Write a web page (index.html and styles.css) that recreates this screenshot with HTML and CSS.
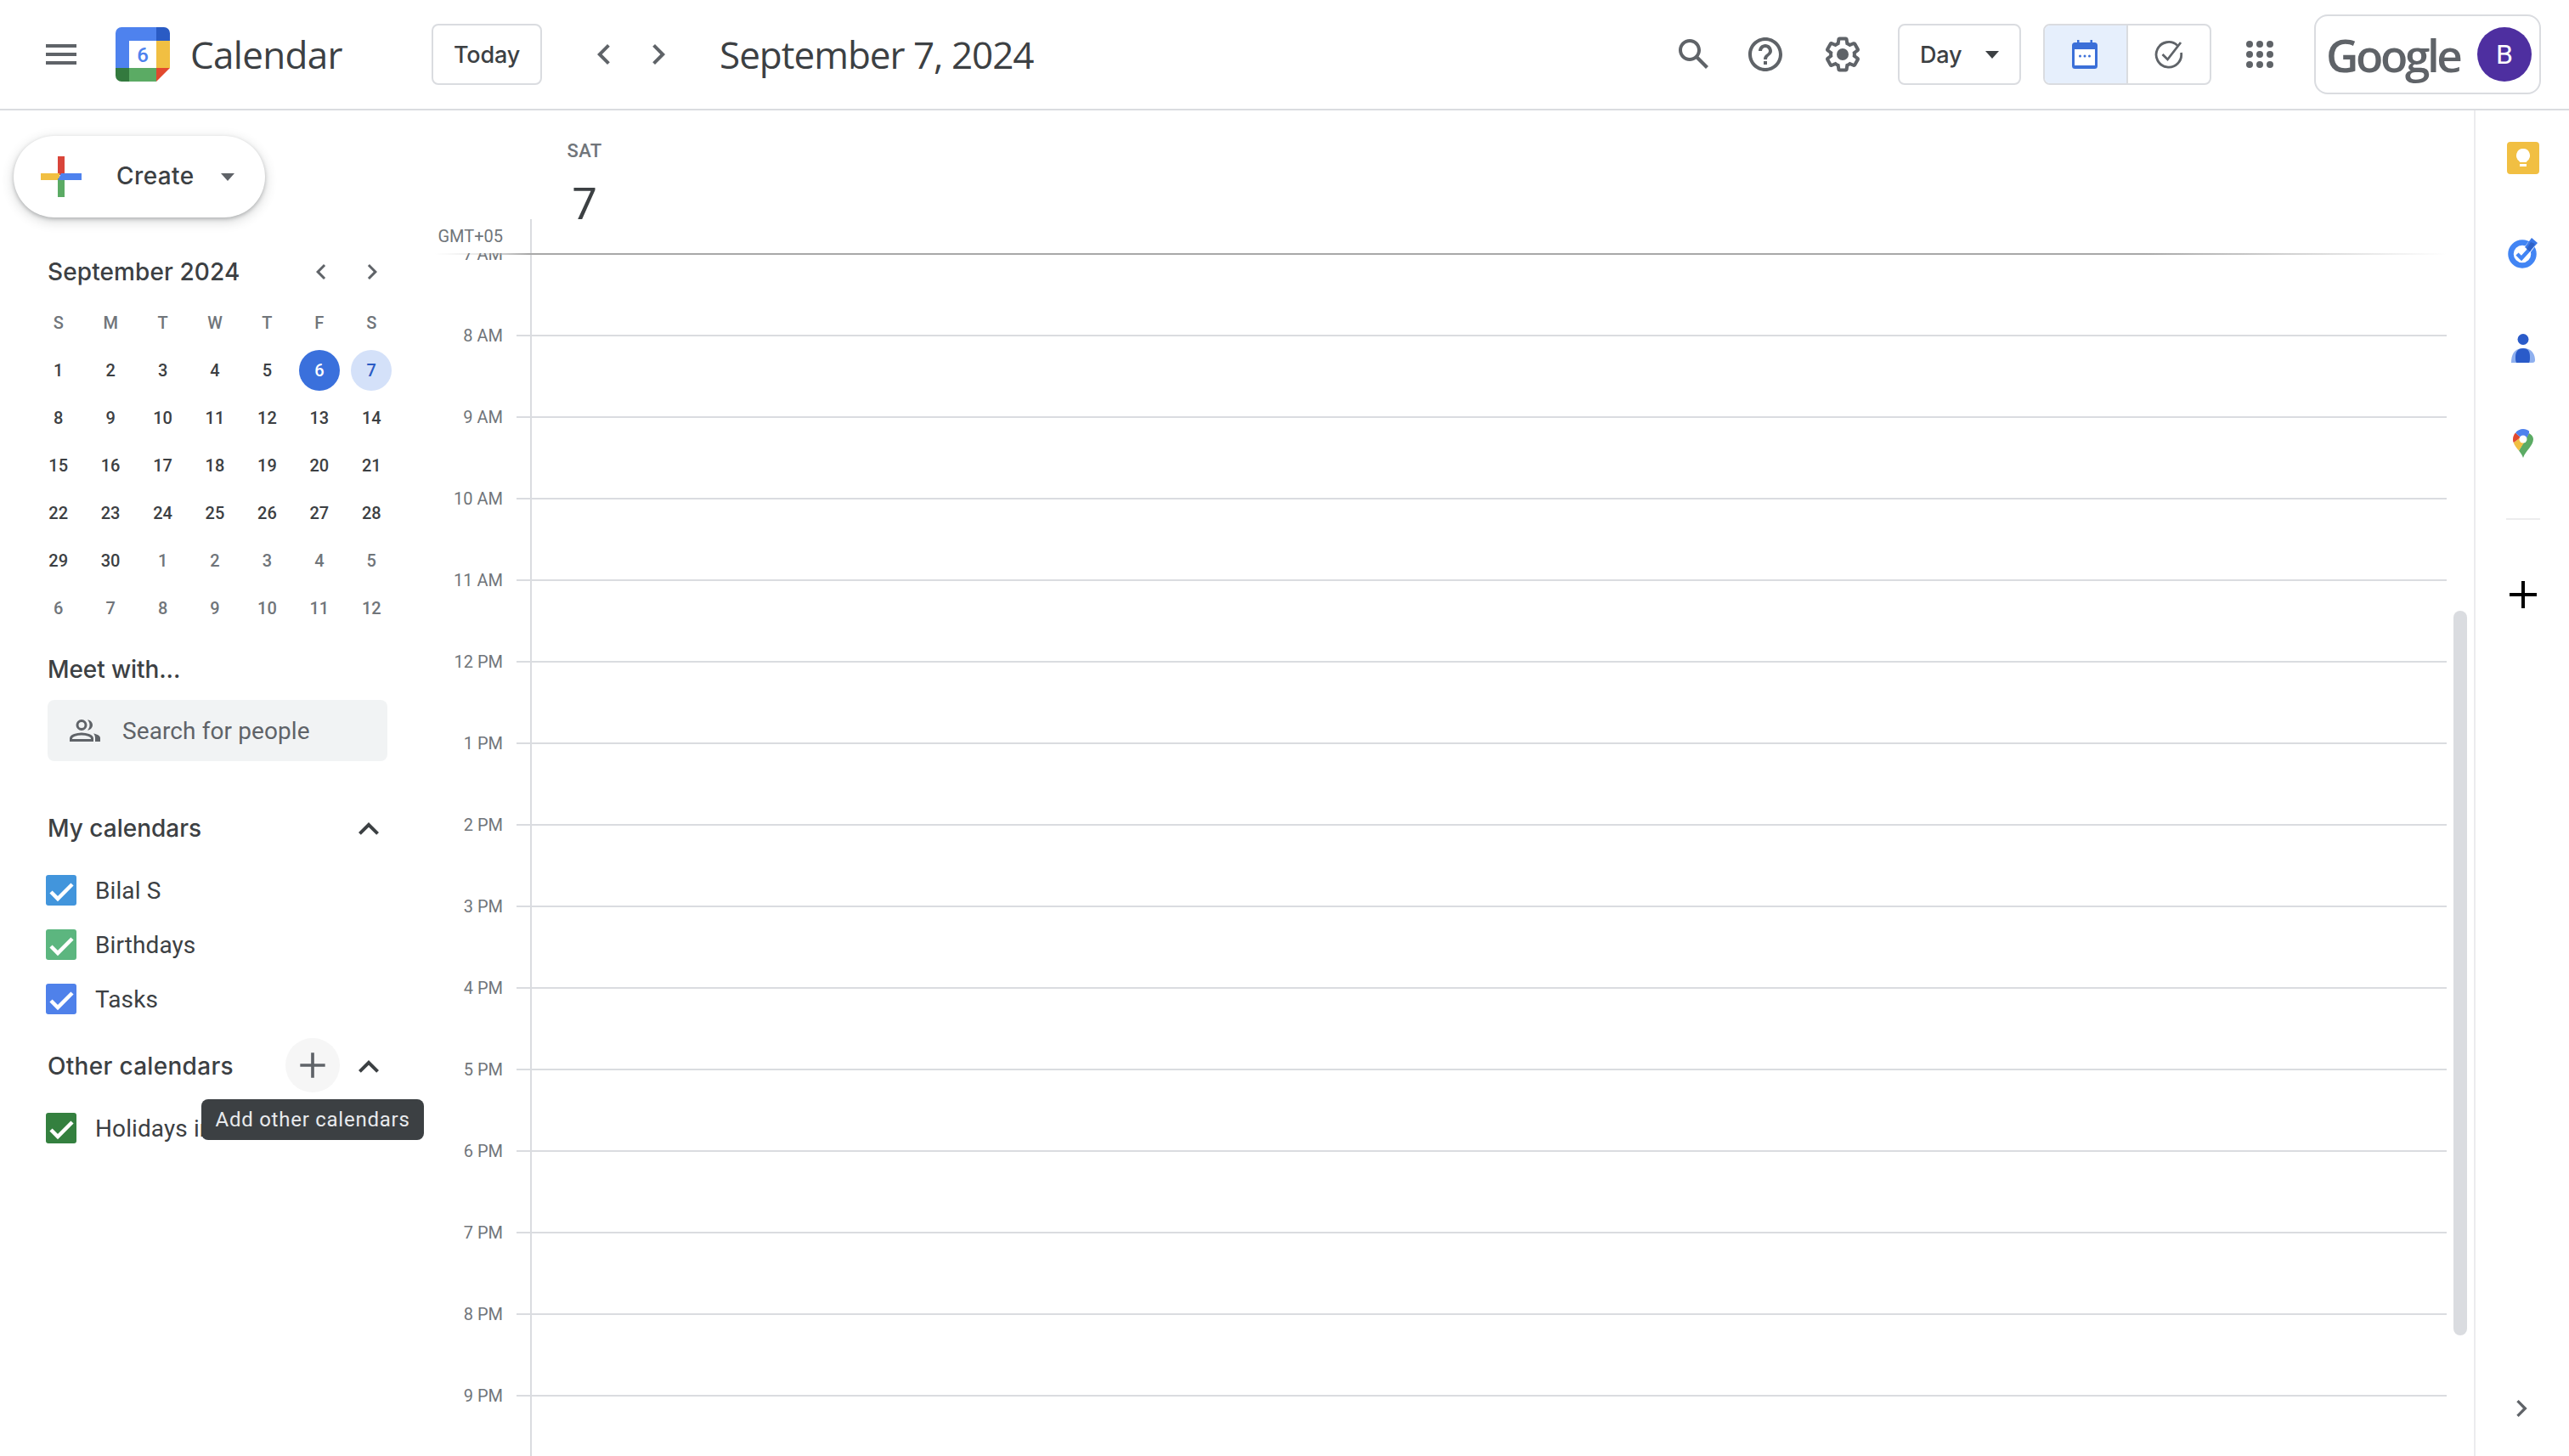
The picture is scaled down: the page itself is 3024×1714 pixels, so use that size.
FILE: index.html
```html
<!DOCTYPE html>
<html lang="en">
<head>
<meta charset="utf-8">
<title>Google Calendar - September 7, 2024</title>
<link rel="stylesheet" href="styles.css">
</head>
<body>
<header class="topbar">
  <div class="brand">
    <svg class="icon48 grey" viewBox="0 0 24 24"><path d="M3 18h18v-2H3v2zm0-5h18v-2H3v2zm0-7v2h18V6H3z"/></svg>
    <svg class="logo" viewBox="0 0 64 64">
      <path fill="#4e82ee" d="M7 0H48V16H16V48H0V7a7 7 0 0 1 7-7z"/>
      <path fill="#2a5bc4" d="M48 0h9a7 7 0 0 1 7 7v9H48z"/>
      <rect fill="#f1bf42" x="48" y="16" width="16" height="32"/>
      <rect fill="#5bab64" x="16" y="48" width="32" height="16"/>
      <path fill="#337a3e" d="M0 48H16V64H7a7 7 0 0 1-7-7z"/>
      <path fill="#e2492e" d="M48 48H64L48 64z"/>
      <rect fill="#fff" x="16" y="16" width="32" height="32"/>
      <text class="logo-num" x="32" y="41" text-anchor="middle">6</text>
    </svg>
    <span class="brand-name">Calendar</span>
  </div>
  <button class="outline today">Today</button>
  <svg class="icon48 grey nav-prev" viewBox="0 0 24 24"><path d="M15.41 16.59L10.83 12l4.58-4.59L14 6l-6 6 6 6z"/></svg>
  <svg class="icon48 grey nav-next" viewBox="0 0 24 24"><path d="M8.59 16.59L13.17 12 8.59 7.41 10 6l6 6-6 6z"/></svg>
  <h1 class="title">September 7, 2024</h1>
  <svg class="icon48 grey search-ic" viewBox="0 0 24 24"><path d="M20.49 19l-5.73-5.73C15.53 12.2 16 10.91 16 9.5 16 5.91 13.09 3 9.5 3S3 5.91 3 9.5 5.91 16 9.5 16c1.41 0 2.7-.47 3.77-1.24L19 20.49 20.49 19zM5 9.5C5 7.01 7.01 5 9.5 5S14 7.01 14 9.5 11.99 14 9.5 14 5 11.99 5 9.5z"/></svg>
  <svg class="icon48 grey help-ic" viewBox="0 0 24 24"><path d="M11 18h2v-2h-2v2zm1-16C6.48 2 2 6.48 2 12s4.48 10 10 10 10-4.48 10-10S17.52 2 12 2zm0 18c-4.41 0-8-3.59-8-8s3.59-8 8-8 8 3.59 8 8-3.59 8-8 8zm0-14c-2.21 0-4 1.79-4 4h2c0-1.1.9-2 2-2s2 .9 2 2c0 2-3 1.75-3 5h2c0-2.25 3-2.5 3-5 0-2.21-1.79-4-4-4z"/></svg>
  <svg class="icon48 grey gear-ic" viewBox="0 0 24 24"><path d="M13.85 22.25h-3.7c-.74 0-1.36-.54-1.45-1.27l-.27-1.89c-.27-.14-.53-.29-.79-.46l-1.8.72c-.7.26-1.47-.03-1.81-.65L2.2 15.53c-.35-.66-.2-1.44.36-1.88l1.53-1.19c-.01-.15-.02-.3-.02-.46 0-.15.01-.31.02-.46l-1.52-1.19c-.59-.45-.74-1.26-.37-1.88l1.85-3.19c.34-.62 1.11-.9 1.79-.63l1.81.73c.26-.17.52-.32.78-.46l.27-1.91c.09-.7.71-1.25 1.44-1.25h3.7c.74 0 1.36.54 1.45 1.27l.27 1.89c.27.14.53.29.79.46l1.8-.72c.71-.26 1.48.03 1.82.65l1.84 3.18c.36.66.2 1.44-.36 1.88l-1.52 1.19c.01.15.02.3.02.46s-.01.31-.02.46l1.52 1.19c.56.45.72 1.23.37 1.86l-1.86 3.22c-.34.62-1.11.9-1.8.63l-1.8-.72c-.26.17-.52.32-.78.46l-.27 1.91c-.1.68-.72 1.22-1.46 1.22zm-3.23-2h2.76l.37-2.55.53-.22c.44-.18.88-.44 1.34-.78l.45-.34 2.38.96 1.38-2.4-2.03-1.58.07-.56c.03-.26.06-.51.06-.78s-.03-.53-.06-.78l-.07-.56 2.03-1.58-1.39-2.4-2.39.96-.45-.35c-.42-.32-.87-.58-1.33-.77l-.52-.22-.37-2.55h-2.76l-.37 2.55-.53.21c-.44.19-.88.44-1.34.79l-.45.33-2.38-.95-1.39 2.39 2.03 1.58-.07.56a7 7 0 0 0-.06.79c0 .26.02.53.06.78l.07.56-2.03 1.58 1.38 2.4 2.39-.96.45.35c.43.33.86.58 1.33.77l.53.22.38 2.55z"/><circle cx="12" cy="12" r="3.5"/></svg>
  <button class="outline day-select"><span>Day</span><i class="caret"></i></button>
  <div class="toggle">
    <div class="toggle-on">
      <svg class="icon-cal" viewBox="0 0 30 34"><path fill="#3b6fd8" d="M6 0h2.5v3h13V0H24v3h2.5A3.5 3.5 0 0 1 30 6.500v24a3.500 3.500 0 0 1-3.500 3.500h-23A3.500 3.500 0 0 1 0 30.500v-24A3.500 3.500 0 0 1 3.500 3H6z"/><rect fill="#fff" x="3" y="11" width="24" height="19"/><circle fill="#3b6fd8" cx="9.500" cy="19" r="1.500"/><circle fill="#3b6fd8" cx="15" cy="19" r="1.500"/><circle fill="#3b6fd8" cx="20.500" cy="19" r="1.500"/></svg>
    </div>
    <div class="toggle-off">
      <svg class="icon-task" viewBox="0 0 34 34"><path fill="none" stroke="#5f6368" stroke-width="2.800" d="M27 6.500A14.800 14.800 0 1 0 31.500 15"/><path fill="none" stroke="#5f6368" stroke-width="2.800" d="M9.500 17l6 6L31 3"/></svg>
    </div>
  </div>
  <svg class="icon48 grey apps-ic" viewBox="0 0 24 24"><circle cx="6" cy="6" r="2"/><circle cx="12" cy="6" r="2"/><circle cx="18" cy="6" r="2"/><circle cx="6" cy="12" r="2"/><circle cx="12" cy="12" r="2"/><circle cx="18" cy="12" r="2"/><circle cx="6" cy="18" r="2"/><circle cx="12" cy="18" r="2"/><circle cx="18" cy="18" r="2"/></svg>
  <div class="account">
    <span class="wordmark">Google</span>
    <span class="avatar">B</span>
  </div>
</header>

<div class="body-row">
  <aside class="sidebar">
    <button class="create">
      <svg class="create-plus" viewBox="0 0 48 48">
        <rect fill="#d9453a" x="20" y="0" width="8" height="22"/>
        <rect fill="#f1bf42" x="0" y="20" width="22" height="8"/>
        <rect fill="#5bab64" x="20" y="26" width="8" height="22"/>
        <path fill="#4e82ee" d="M24 20H48V28H20z"/>
      </svg>
      <span class="create-label">Create</span>
      <i class="caret"></i>
    </button>

    <div class="mini-head">
      <span class="mini-title">September 2024</span>
      <svg class="icon36 grey mini-prev" viewBox="0 0 24 24"><path d="M15.41 16.59L10.83 12l4.58-4.59L14 6l-6 6 6 6z"/></svg>
      <svg class="icon36 grey mini-next" viewBox="0 0 24 24"><path d="M8.59 16.59L13.17 12 8.59 7.41 10 6l6 6-6 6z"/></svg>
    </div>
    <div class="mini-grid">
      <span class="wd">S</span><span class="wd">M</span><span class="wd">T</span><span class="wd">W</span><span class="wd">T</span><span class="wd">F</span><span class="wd">S</span>
      <span class="d"><b>1</b></span><span class="d"><b>2</b></span><span class="d"><b>3</b></span><span class="d"><b>4</b></span><span class="d"><b>5</b></span><span class="d"><b class="today-dot">6</b></span><span class="d"><b class="sel-dot">7</b></span>
      <span class="d"><b>8</b></span><span class="d"><b>9</b></span><span class="d"><b>10</b></span><span class="d"><b>11</b></span><span class="d"><b>12</b></span><span class="d"><b>13</b></span><span class="d"><b>14</b></span>
      <span class="d"><b>15</b></span><span class="d"><b>16</b></span><span class="d"><b>17</b></span><span class="d"><b>18</b></span><span class="d"><b>19</b></span><span class="d"><b>20</b></span><span class="d"><b>21</b></span>
      <span class="d"><b>22</b></span><span class="d"><b>23</b></span><span class="d"><b>24</b></span><span class="d"><b>25</b></span><span class="d"><b>26</b></span><span class="d"><b>27</b></span><span class="d"><b>28</b></span>
      <span class="d"><b>29</b></span><span class="d"><b>30</b></span><span class="d out"><b>1</b></span><span class="d out"><b>2</b></span><span class="d out"><b>3</b></span><span class="d out"><b>4</b></span><span class="d out"><b>5</b></span>
      <span class="d out"><b>6</b></span><span class="d out"><b>7</b></span><span class="d out"><b>8</b></span><span class="d out"><b>9</b></span><span class="d out"><b>10</b></span><span class="d out"><b>11</b></span><span class="d out"><b>12</b></span>
    </div>

    <h2 class="meet">Meet with...</h2>
    <div class="people">
      <svg class="people-ic" viewBox="0 0 36 26"><circle cx="14" cy="6.500" r="5" fill="none" stroke="#5f6368" stroke-width="3"/><path fill="none" stroke="#5f6368" stroke-width="3" d="M1.500 24.500v-2.200c0-3.200 7-5.300 12.500-5.300s12.500 2.100 12.500 5.300v2.200z"/><path fill="#5f6368" d="M21 .5c3.300 0 6 2.700 6 6s-2.700 6-6 6c1.600-1.600 2.500-3.700 2.500-6S22.600 2.100 21 .5zM28 16.500c3.800.7 8 2.400 8 5.300V26h-6v-4.200c0-2.200-.7-4-2-5.300z"/></svg>
      <span>Search for people</span>
    </div>

    <div class="cal-head mine">
      <h2>My calendars</h2>
      <svg class="icon48 ink chev-up" viewBox="0 0 24 24"><path d="M12 8l-6 6 1.410 1.410L12 10.830l4.590 4.580L18 14z"/></svg>
    </div>
    <ul class="cal-list first">
      <li><span class="check c-blue"><svg viewBox="0 0 36 36"><path d="M6 20l8 8L31 11"/></svg></span>Bilal S</li>
      <li><span class="check c-green"><svg viewBox="0 0 36 36"><path d="M6 20l8 8L31 11"/></svg></span>Birthdays</li>
      <li><span class="check c-tasks"><svg viewBox="0 0 36 36"><path d="M6 20l8 8L31 11"/></svg></span>Tasks</li>
    </ul>

    <div class="cal-head other">
      <h2>Other calendars</h2>
      <span class="add-btn"><svg class="icon48 grey" viewBox="0 0 24 24"><path d="M20 13h-7v7h-2v-7H4v-2h7V4h2v7h7v2z"/></svg></span>
      <svg class="icon48 ink" viewBox="0 0 24 24"><path d="M12 8l-6 6 1.410 1.410L12 10.830l4.590 4.580L18 14z"/></svg>
      <div class="tooltip">Add other calendars</div>
    </div>
    <ul class="cal-list second">
      <li><span class="check c-holiday"><svg viewBox="0 0 36 36"><path d="M6 20l8 8L31 11"/></svg></span>Holidays in Pakistan</li>
    </ul>
  </aside>

  <main class="day">
    <div class="day-head">
      <div class="gmt">GMT+05</div>
      <div class="head-rule"></div>
      <div class="day-id">
        <div class="dow">SAT</div>
        <div class="dom">7</div>
      </div>
    </div>
    <div class="hours">
      <div class="hour"><span class="lab">7 AM</span><i class="tick"></i><i class="cell"></i></div>
      <div class="hour"><span class="lab">8 AM</span><i class="tick"></i><i class="cell"></i></div>
      <div class="hour"><span class="lab">9 AM</span><i class="tick"></i><i class="cell"></i></div>
      <div class="hour"><span class="lab">10 AM</span><i class="tick"></i><i class="cell"></i></div>
      <div class="hour"><span class="lab">11 AM</span><i class="tick"></i><i class="cell"></i></div>
      <div class="hour"><span class="lab">12 PM</span><i class="tick"></i><i class="cell"></i></div>
      <div class="hour"><span class="lab">1 PM</span><i class="tick"></i><i class="cell"></i></div>
      <div class="hour"><span class="lab">2 PM</span><i class="tick"></i><i class="cell"></i></div>
      <div class="hour"><span class="lab">3 PM</span><i class="tick"></i><i class="cell"></i></div>
      <div class="hour"><span class="lab">4 PM</span><i class="tick"></i><i class="cell"></i></div>
      <div class="hour"><span class="lab">5 PM</span><i class="tick"></i><i class="cell"></i></div>
      <div class="hour"><span class="lab">6 PM</span><i class="tick"></i><i class="cell"></i></div>
      <div class="hour"><span class="lab">7 PM</span><i class="tick"></i><i class="cell"></i></div>
      <div class="hour"><span class="lab">8 PM</span><i class="tick"></i><i class="cell"></i></div>
      <div class="hour"><span class="lab">9 PM</span><i class="tick"></i><i class="cell"></i></div>
      <div class="edge-shadow"></div>
      <div class="scroll-thumb"></div>
    </div>
  </main>

  <nav class="rail">
    <div class="slot">
      <svg class="ic-keep" viewBox="0 0 38 38"><rect width="38" height="38" rx="4" fill="#f1bf42"/><path fill="#fff" d="M19 8a8 8 0 0 0-4.800 14.400c.5.400.8 1 .8 1.600h8c0-.6.300-1.200.8-1.600A8 8 0 0 0 19 8z"/><rect fill="#fff" x="15" y="26" width="8" height="3"/></svg>
    </div>
    <div class="slot">
      <svg class="ic-tasks" viewBox="0 0 36 36"><circle cx="17" cy="19" r="13.500" fill="none" stroke="#4285f4" stroke-width="6.500"/><path fill="#fff" d="M24 5l8 5-6 8-8-5z"/><path fill="none" stroke="#4285f4" stroke-width="4.500" d="M11 19l5 5 10-11"/><path fill="#3b78e7" d="M28 0l7 6-9 10-6-5z"/><path fill="#2f62c8" d="M27 5l5 2-6 9-4-3z"/></svg>
    </div>
    <div class="slot">
      <svg class="ic-person" viewBox="0 0 28 34"><circle cx="14" cy="6.500" r="6.500" fill="#2a5bc9"/><path fill="#8fb0ef" d="M0 34c0-9 3-17 14-17s14 8 14 14c0 2-1 3-3 3z"/><path fill="#2a5bc9" d="M6 34c-1-2-1-4-1-7 0-6 3-10 9-10s8 4 8 10c0 3 0 5-1 7z"/></svg>
    </div>
    <div class="slot">
      <svg class="ic-maps" viewBox="0 0 24 34">
        <path fill="#5bab64" d="M24 12c0 8-9 13-12 22-1-3-3-6-5-8.500L19 5c3 1.800 5 4.200 5 7z"/>
        <path fill="#f1bf42" d="M7 25.500C4 22 1.500 19 .8 16L9 10l6 3z"/>
        <path fill="#e2492e" d="M.8 16C0 14.500 0 13 0 12c0-3 1.200-5.500 3-7.500L9 10z"/>
        <path fill="#4e82ee" d="M3 4.500C5 1.700 8.500 0 12 0c3 0 5.300 1 7 2.500V5l-4 8-6-3z"/>
        <circle cx="12" cy="12" r="4.500" fill="#fff"/>
      </svg>
    </div>
    <div class="rail-sep"></div>
    <svg class="icon48 black rail-plus" viewBox="0 0 24 24"><path d="M20 13h-7v7h-2v-7H4v-2h7V4h2v7h7v2z"/></svg>
    <svg class="icon40 grey rail-more" viewBox="0 0 24 24"><path d="M8.590 16.590L13.170 12 8.590 7.410 10 6l6 6-6 6z"/></svg>
  </nav>
</div>
</body>
</html>
```
FILE: styles.css
```css
* { box-sizing: border-box; }
html, body { margin: 0; height: 100%; }
body {
  width: 3024px; height: 1714px; overflow: hidden; background: #fff;
  font-family: Roboto, "Liberation Sans", sans-serif; color: #3c4043;
  display: flex; flex-direction: column;
}
h1, h2, ul { margin: 0; padding: 0; font-weight: 500; list-style: none; }
svg { display: block; flex: none; }
.icon48 { width: 48px; height: 48px; }
.icon40 { width: 40px; height: 40px; }
.icon36 { width: 36px; height: 36px; }
.grey { fill: #5f6368; }
.ink { fill: #3c4043; }
.black { fill: #000; }

.topbar {
  height: 130px; flex: none; border-bottom: 2px solid #dadce0;
  display: flex; align-items: center;
}
.brand { margin-left: 48px; width: 460px; display: flex; align-items: center; }
.logo { width: 64px; height: 64px; margin-left: 40px; }
.logo-num { font: 500 24px Roboto, sans-serif; fill: #4e82ee; }
.brand-name { margin-left: 24px; font: 400 44px "Open Sans", sans-serif; letter-spacing: -.7px; }
.outline {
  height: 72px; background: #fff; border: 2px solid #dadce0; border-radius: 8px;
  font: 500 27px Inter, sans-serif; color: #3c4043; padding: 0;
}
.today { width: 130px; letter-spacing: -.2px; }
.nav-prev { margin-left: 49px; }
.nav-next { margin-left: 16px; }
.title { margin-left: 48px; font: 400 44px "Open Sans", sans-serif; letter-spacing: -1px; white-space: nowrap; }
.search-ic { margin-left: auto; }
.help-ic { margin-left: 36px; }
.gear-ic { margin-left: 43px; }
.day-select {
  margin-left: 41px; width: 145px; display: flex; align-items: center; padding-left: 24px;
  letter-spacing: -.2px;
}
.caret {
  display: block; width: 0; height: 0; border: 8px solid transparent; border-top: 9px solid #5f6368; border-bottom: 0;
}
.day-select .caret { margin-left: 28px; border-top-color: #3c4043; }
.toggle {
  margin-left: 26px; width: 198px; height: 72px; display: flex;
  border: 2px solid #dadce0; border-radius: 8px; overflow: hidden;
}
.toggle-on { width: 98px; background: #e6effc; border-right: 2px solid #dadce0; display: flex; align-items: center; justify-content: center; }
.toggle-off { flex: 1; display: flex; align-items: center; justify-content: center; }
.icon-cal { width: 30px; height: 34px; margin-right: 2px; }
.icon-task { width: 34px; height: 34px; }
.apps-ic { margin-left: 33px; }
.account {
  margin-left: 40px; margin-right: 33px; width: 267px; height: 94px;
  border: 2px solid #dadce0; border-radius: 16px; display: flex; align-items: center; padding-left: 12px;
}
.wordmark { font: 600 53px "Open Sans", sans-serif; color: #5f6368; letter-spacing: -3.4px; width: 178px; }
.avatar {
  width: 64px; height: 64px; border-radius: 50%; background: #4e2fa0; color: #fff;
  font: 400 32px Roboto, sans-serif; display: flex; align-items: center; justify-content: center;
}

.body-row { flex: 1; display: flex; min-height: 0; }
.sidebar { width: 512px; flex: none; }
.create {
  margin: 30px 0 0 16px; width: 296px; height: 96px; border: 0; border-radius: 48px; background: #fff;
  box-shadow: 0 2px 4px rgba(60,64,67,.3), 0 4px 12px 3px rgba(60,64,67,.15);
  display: flex; align-items: center; padding: 0 0 0 32px; color: #3c4043;
}
.create-plus { width: 48px; height: 48px; }
.create-label { margin-left: 41px; font: 500 28px Inter, sans-serif; letter-spacing: .4px; width: 92px; text-align: left; margin-top: -2px; }
.create .caret { margin-left: 31px; }

.mini-head { margin: 40px 0 0 56px; height: 48px; width: 400px; display: flex; align-items: center; }
.mini-title { font: 500 28px Inter, sans-serif; letter-spacing: .1px; width: 304px; white-space: nowrap; }
.mini-next { margin-left: 24px; }
.mini-grid { margin: 8px 0 0 38px; width: 430px; display: grid; grid-template-columns: repeat(7, 1fr); grid-auto-rows: 56px; }
.wd { display: flex; align-items: center; justify-content: center; font: 500 20px Roboto, sans-serif; color: #70757a; }
.d { display: flex; align-items: center; justify-content: center; font-size: 20px; }
.d b {
  width: 48px; height: 48px; border-radius: 50%; font-weight: 500; display: flex; align-items: center; justify-content: center;
}
.d.out { color: #70757a; }
.today-dot { background: #3a70dc; color: #fff; }
.sel-dot { background: #d4e1f9; color: #2a5bc4; }

.meet { margin: 24px 0 -1px 56px; height: 40px; font: 500 28px/40px Inter, sans-serif; letter-spacing: -.1px; }
.people {
  margin: 17px 0 0 56px; width: 400px; height: 72px; background: #f1f3f4; border-radius: 8px;
  display: flex; align-items: center; padding-left: 26px; font-size: 28px; letter-spacing: .1px; color: #5f6368;
}
.people-ic { width: 36px; height: 26px; }
.people span { margin-left: 26px; }

.cal-head { position: relative; margin-left: 56px; width: 402px; height: 48px; display: flex; align-items: center; }
.cal-head h2 { font: 500 28px Inter, sans-serif; margin-right: auto; margin-top: -2px; }
.other h2 { letter-spacing: .3px; }
.mine { margin-top: 56px; }
.other { margin-top: 24px; }
.add-btn {
  width: 64px; height: 64px; border-radius: 50%; background: #f6f6f6; margin-right: 10px; margin-top: -4px;
  display: flex; align-items: center; justify-content: center;
}
.add-btn svg { width: 44px; height: 44px; }
.tooltip {
  position: absolute; left: 181px; top: 62px; width: 262px; height: 48px; border-radius: 8px; background: #3c4043; color: #e8eaed;
  display: flex; align-items: center; justify-content: center; font-size: 24px; letter-spacing: .75px; white-space: nowrap; z-index: 2;
}
.cal-list { margin: 16px 0 0 54px; font-weight: 400; }
.cal-list li { height: 64px; display: flex; align-items: center; font-size: 28px; letter-spacing: .1px; white-space: nowrap; }
.check { width: 36px; height: 36px; border-radius: 3px; margin-right: 22px; flex: none; }
.check svg { width: 36px; height: 36px; }
.check path { fill: none; stroke: #fff; stroke-width: 4.5px; }
.c-blue { background: #4295dc; }
.c-green { background: #5cb67f; }
.c-tasks { background: #4f81ea; }
.c-holiday { background: #34803f; }

.day { flex: 1; min-width: 0; display: flex; flex-direction: column; }
.day-head { height: 168px; flex: none; display: flex; align-items: flex-end; }
.gmt { width: 112px; height: 40px; padding-right: 32px; text-align: right; line-height: 40px; font-size: 20px; color: #70757a; }
.head-rule { width: 2px; height: 40px; background: #dadce0; }
.day-id { align-self: flex-start; width: 124px; text-align: center; padding-top: 32px; margin-bottom: -40px; }
.dow { height: 32px; font: 500 22px/32px Roboto, sans-serif; color: #70757a; letter-spacing: .4px; }
.dom { margin-top: 15px; height: 64px; line-height: 64px; font-size: 52px; font-weight: 400; }

.hours { position: relative; flex: 1; min-height: 0; overflow: hidden; padding-right: 32px; }
.hour { height: 96px; display: flex; }
.hour:first-child .tick, .hour:first-child .cell { border-top-color: transparent; }
.lab {
  width: 80px; text-align: right; font-size: 20px; line-height: 24px; color: #70757a; margin-top: -11px; white-space: nowrap;
}
.tick { width: 32px; margin-left: 16px; border-top: 2px solid #dadce0; }
.cell { flex: 1; border-top: 2px solid #dadce0; border-left: 2px solid #dadce0; margin-left: -16px; }
.edge-shadow {
  position: absolute; left: 0; top: 0; right: 32px; height: 2px;
  background: linear-gradient(90deg, rgba(170,170,170,0) 0, rgba(170,170,170,.3) 60px, #a8a8a8 110px, #a8a8a8 85%, rgba(170,170,170,0) 100%);
}
.scroll-thumb { position: absolute; right: 8px; top: 421px; width: 16px; height: 853px; border-radius: 8px; background: #dadce0; }

.rail { width: 112px; flex: none; border-left: 2px solid #ececee; padding-left: 2px; display: flex; flex-direction: column; align-items: center; }
.slot { height: 112px; flex: none; display: flex; align-items: center; justify-content: center; }
.ic-keep { width: 38px; height: 38px; }
.ic-tasks { width: 36px; height: 36px; }
.ic-person { width: 28px; height: 34px; }
.ic-maps { width: 24px; height: 34px; }
.rail-sep { margin-top: 32px; width: 40px; height: 2px; background: #ececee; flex: none; }
.rail-plus { margin-top: 64px; }
.rail-more { margin-top: auto; margin-bottom: 36px; margin-right: 4px; }
```
